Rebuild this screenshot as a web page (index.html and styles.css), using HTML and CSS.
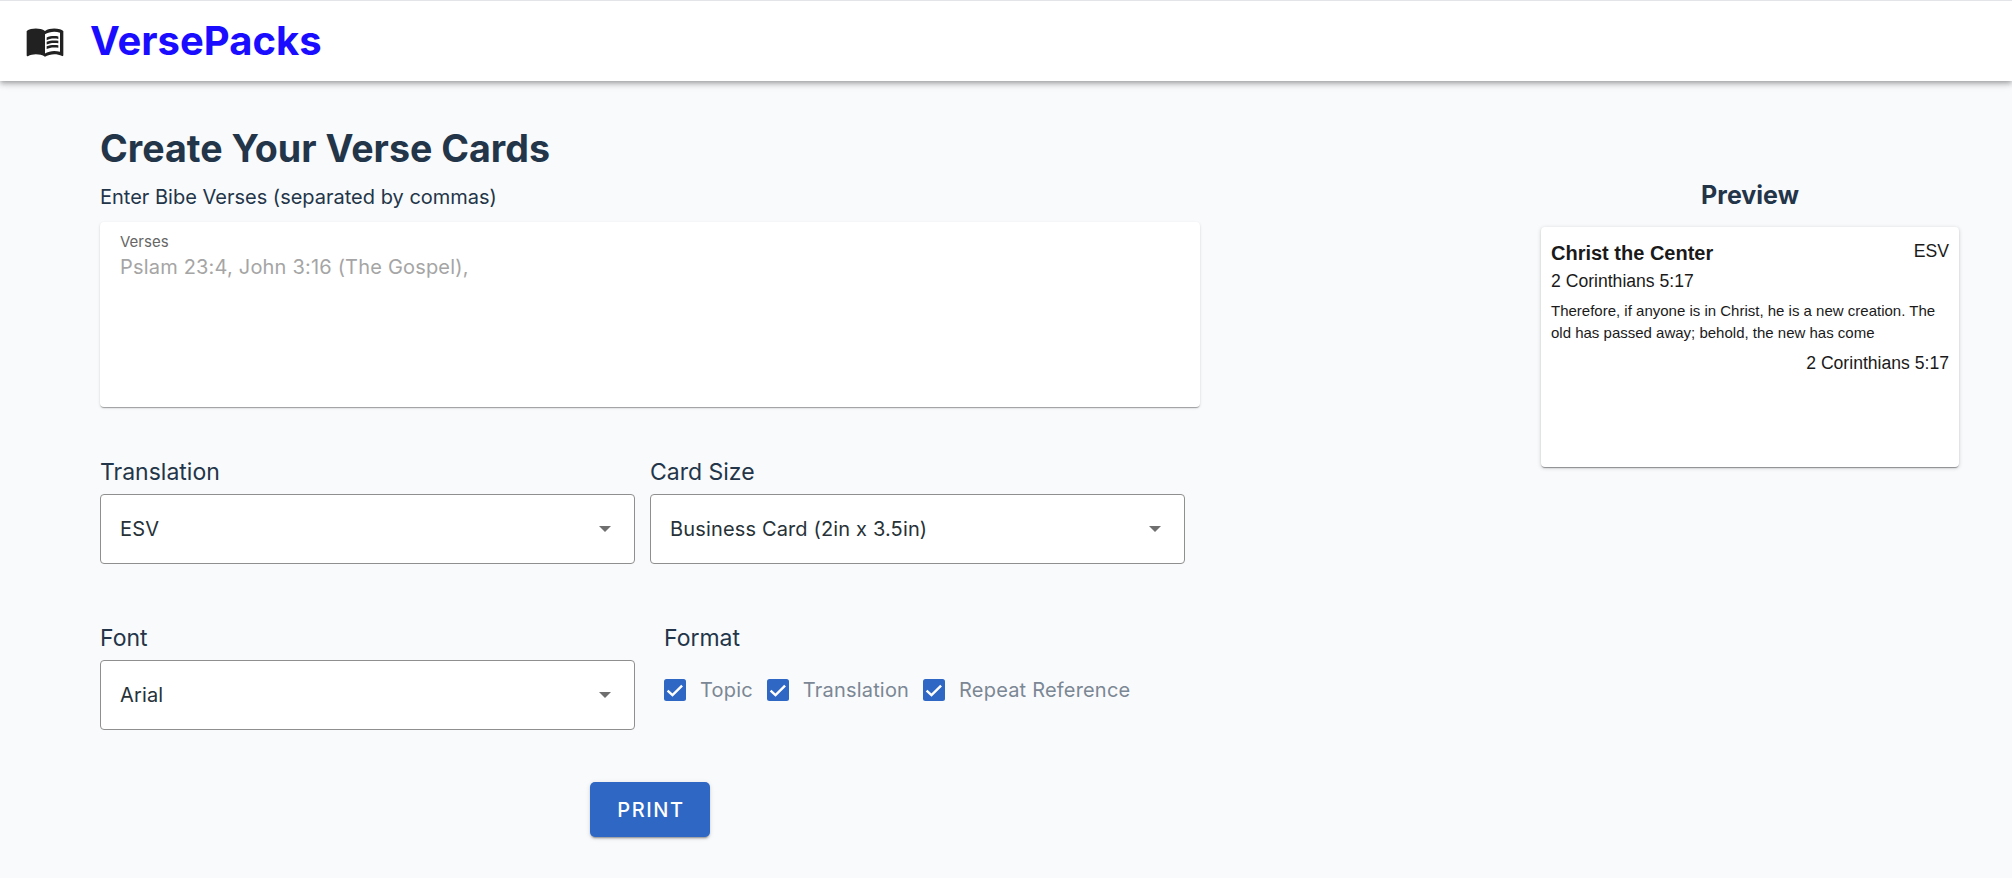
FILE: index.html
```html
<!DOCTYPE html>
<html lang="en">
<head>
<meta charset="utf-8">
<title>VersePacks</title>
<link rel="stylesheet" href="styles.css">
</head>
<body>
<header class="topbar">
  <svg class="logo-icon" viewBox="0 0 24 24" aria-hidden="true"><path fill="#212121" d="M21 5c-1.11-.35-2.33-.5-3.5-.5-1.95 0-4.05.4-5.5 1.5-1.45-1.1-3.55-1.5-5.5-1.5S2.45 4.9 1 6v14.65c0 .25.25.5.5.5.1 0 .15-.05.25-.05C3.1 20.45 5.05 20 6.5 20c1.95 0 4.05.4 5.5 1.5 1.35-.85 3.8-1.5 5.5-1.5 1.65 0 3.35.3 4.75 1.05.1.05.15.05.25.05.25 0 .5-.25.5-.5V6c-.6-.45-1.25-.75-2-1zm0 13.5c-1.1-.35-2.3-.5-3.5-.5-1.7 0-4.15.65-5.5 1.5V8c1.35-.85 3.8-1.5 5.5-1.5 1.2 0 2.4.15 3.5.5v11.5z"/><path fill="#212121" d="M17.5 10.5c.88 0 1.73.09 2.5.26V9.24c-.79-.15-1.64-.24-2.5-.24-1.7 0-3.24.29-4.5.83v1.66c1.13-.64 2.7-.99 4.5-.99zM13 12.49v1.66c1.13-.64 2.7-.99 4.5-.99.88 0 1.73.09 2.5.26V11.9c-.79-.15-1.64-.24-2.5-.24-1.7 0-3.24.3-4.5.83zM17.5 14.33c-1.7 0-3.24.29-4.5.83v1.66c1.13-.64 2.7-.99 4.5-.99.88 0 1.73.09 2.5.26v-1.52c-.79-.16-1.64-.24-2.5-.24z"/></svg>
  <span class="brand">VersePacks</span>
</header>
<main class="page">
  <section class="form-col">
    <h1 class="title">Create Your Verse Cards</h1>
    <p class="hint">Enter Bibe Verses (separated by commas)</p>
    <div class="verses">
      <span class="verses-label">Verses</span>
      <span class="verses-placeholder">Pslam 23:4, John 3:16 (The Gospel),</span>
    </div>
    <div class="row row-first">
      <div class="field">
        <div class="field-label">Translation</div>
        <div class="select"><span>ESV</span><i class="caret"></i></div>
      </div>
      <div class="field">
        <div class="field-label">Card Size</div>
        <div class="select"><span>Business Card (2in x 3.5in)</span><i class="caret"></i></div>
      </div>
    </div>
    <div class="row row-second">
      <div class="field">
        <div class="field-label">Font</div>
        <div class="select"><span>Arial</span><i class="caret"></i></div>
      </div>
      <div class="format">
        <div class="field-label">Format</div>
        <div class="checks">
          <label class="check"><svg class="box" viewBox="0 0 22 22"><rect width="22" height="22" rx="2.5" fill="#2e67c4"/><path d="M3.6 11.6l4.9 4.6 9.6-9.6" fill="none" stroke="#fff" stroke-width="2.4"/></svg>Topic</label>
          <label class="check"><svg class="box" viewBox="0 0 22 22"><rect width="22" height="22" rx="2.5" fill="#2e67c4"/><path d="M3.6 11.6l4.9 4.6 9.6-9.6" fill="none" stroke="#fff" stroke-width="2.4"/></svg>Translation</label>
          <label class="check"><svg class="box" viewBox="0 0 22 22"><rect width="22" height="22" rx="2.5" fill="#2e67c4"/><path d="M3.6 11.6l4.9 4.6 9.6-9.6" fill="none" stroke="#fff" stroke-width="2.4"/></svg>Repeat Reference</label>
        </div>
      </div>
    </div>
    <div class="actions"><button class="print">PRINT</button></div>
  </section>
  <aside class="preview-col">
    <h2 class="preview-title">Preview</h2>
    <div class="card">
      <div class="card-head">
        <div>
          <div class="card-topic">Christ the Center</div>
          <div class="card-ref">2 Corinthians 5:17</div>
        </div>
        <div class="card-trans">ESV</div>
      </div>
      <p class="card-text">Therefore, if anyone is in Christ, he is a new creation. The old has passed away; behold, the new has come</p>
      <div class="card-ref card-ref-end">2 Corinthians 5:17</div>
    </div>
  </aside>
</main>
</body>
</html>
```
FILE: styles.css
```css
* { box-sizing: border-box; }
html, body { margin: 0; height: 100%; }
body {
  background: #f9fafc;
  font-family: Inter, "Noto Sans", sans-serif;
  color: #233549;
  overflow: hidden;
}
.topbar {
  height: 81px;
  background: #fff;
  border-top: 1px solid #e3e4e8;
  box-shadow: 0 2px 4px -1px rgba(0,0,0,.2), 0 4px 5px rgba(0,0,0,.14), 0 1px 10px rgba(0,0,0,.12);
  display: flex;
  align-items: center;
  padding-left: 25px;
}
.logo-icon { width: 40px; height: 40px; display: block; }
.brand {
  margin-left: 25px;
  font-size: 40px;
  font-weight: 700;
  color: #1a0dff;
  line-height: 1;
}
.page {
  display: flex;
  padding-left: 100px;
}
.form-col { width: 1100px; padding-top: 46px; }
.title {
  margin: 0;
  font-size: 37.6px;
  line-height: 44px;
  font-weight: 700;
  color: #233549;
}
.hint {
  margin: 12px 0 0;
  font-size: 20px;
  line-height: 28px;
  font-weight: 400;
}
.verses {
  margin-top: 11px;
  height: 185px;
  background: #fff;
  border-radius: 4px;
  box-shadow: 0 2px 1px -1px rgba(0,0,0,.2), 0 1px 1px rgba(0,0,0,.14), 0 1px 3px rgba(0,0,0,.12);
  padding: 11px 20px;
  display: flex;
  flex-direction: column;
}
.verses-label { font-size: 15px; line-height: 17px; color: #666; }
.verses-placeholder { font-size: 20px; letter-spacing: .19px; line-height: 34px; color: #a5a5a5; }
.row { display: flex; gap: 15px; }
.row-first { margin-top: 47px; }
.row-second { margin-top: 56px; }
.field { width: 535px; }
.field-label { font-size: 23px; line-height: 36px; color: #233549; margin-bottom: 4px; }
.select {
  height: 70px;
  background: #fff;
  border: 1px solid #8f8f8f;
  border-radius: 4px;
  padding: 0 19px;
  display: flex;
  align-items: center;
  justify-content: space-between;
  font-size: 20px;
  letter-spacing: .15px;
  color: #263238;
}
.caret {
  width: 0;
  height: 0;
  border-left: 6px solid transparent;
  border-right: 6px solid transparent;
  border-top: 6px solid #6f6f6f;
  margin-right: 4px;
}
.format { margin-left: 14px; }
.checks { display: flex; margin-top: 20px; gap: 14px; }
.check {
  display: flex;
  align-items: center;
  gap: 14px;
  font-size: 20px;
  letter-spacing: .19px;
  line-height: 28px;
  color: #7b8794;
}
.box { width: 22px; height: 22px; display: block; }
.actions { display: flex; justify-content: center; margin-top: 52px; width: 1100px; }
.print {
  width: 120px;
  height: 55px;
  border: 0;
  border-radius: 5px;
  background: #2e67c4;
  color: #fff;
  font-family: inherit;
  font-size: 20px;
  font-weight: 500;
  letter-spacing: 1.6px;
  padding: 0 0 0 2px;
  box-shadow: 0 3px 1px -2px rgba(0,0,0,.2), 0 2px 2px rgba(0,0,0,.14), 0 1px 5px rgba(0,0,0,.12);
}
.preview-col { margin-left: 341px; width: 418px; padding-top: 99px; }
.preview-title {
  margin: 0;
  text-align: center;
  font-size: 25px;
  line-height: 30px;
  font-weight: 700;
  color: #233549;
}
.card {
  margin-top: 17px;
  height: 240px;
  background: #fff;
  border-radius: 4px;
  box-shadow: 0 2px 1px -1px rgba(0,0,0,.25), 0 1px 1px rgba(0,0,0,.16), 0 1px 4px rgba(0,0,0,.18);
  padding: 13px 10px;
  font-family: "Liberation Sans", Arial, sans-serif;
  color: #1a1a1a;
}
.card-head { display: flex; justify-content: space-between; }
.card-topic { font-size: 20px; font-weight: 700; line-height: 26px; }
.card-ref { font-size: 17.6px; line-height: 26px; margin-top: 2px; }
.card-trans { font-size: 17.6px; line-height: 22px; }
.card-text { margin: 6px 0 0; font-size: 15px; line-height: 22px; }
.card-ref-end { text-align: right; margin-top: 6px; }
```
